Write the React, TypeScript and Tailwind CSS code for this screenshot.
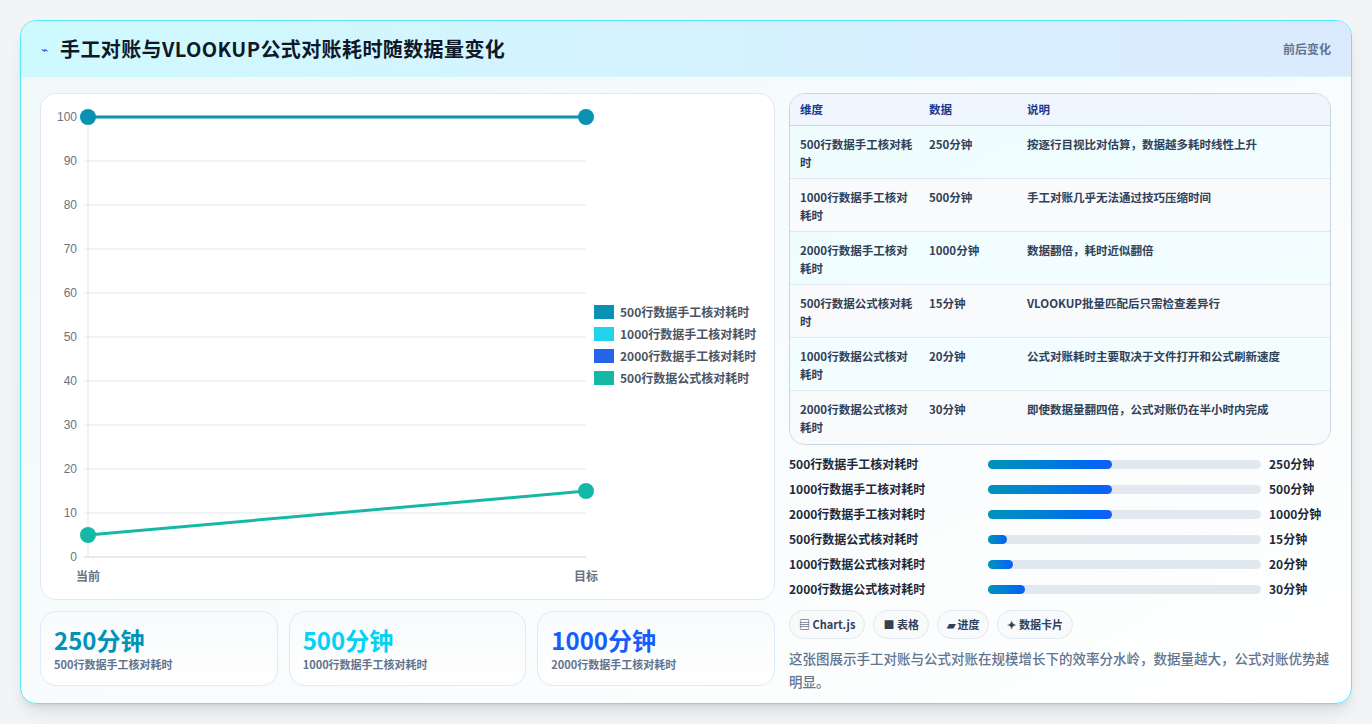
import React from "react";

const rows = [
  ["500行数据手工核对耗时", "250分钟", "按逐行目视比对估算，数据越多耗时线性上升"],
  ["1000行数据手工核对耗时", "500分钟", "手工对账几乎无法通过技巧压缩时间"],
  ["2000行数据手工核对耗时", "1000分钟", "数据翻倍，耗时近似翻倍"],
  ["500行数据公式核对耗时", "15分钟", "VLOOKUP批量匹配后只需检查差异行"],
  ["1000行数据公式核对耗时", "20分钟", "公式对账耗时主要取决于文件打开和公式刷新速度"],
  ["2000行数据公式核对耗时", "30分钟", "即使数据量翻四倍，公式对账仍在半小时内完成"],
];

const bars: [string, string, number][] = [
  ["500行数据手工核对耗时", "250分钟", 45.5],
  ["1000行数据手工核对耗时", "500分钟", 45.5],
  ["2000行数据手工核对耗时", "1000分钟", 45.5],
  ["500行数据公式核对耗时", "15分钟", 7],
  ["1000行数据公式核对耗时", "20分钟", 9.2],
  ["2000行数据公式核对耗时", "30分钟", 13.5],
];

const font = { fontFamily: '"Noto Sans CJK SC", "Noto Sans", sans-serif' };

function Chart() {
  const x0 = 47, x1 = 545, y0 = 463, yTop = 23;
  const ys = (v: number) => y0 - (v / 100) * (y0 - yTop);
  const legend = [
    ["#0891b2", "500行数据手工核对耗时"],
    ["#22d3ee", "1000行数据手工核对耗时"],
    ["#2563eb", "2000行数据手工核对耗时"],
    ["#14b8a6", "500行数据公式核对耗时"],
  ];
  return (
    <svg width="733" height="505" className="block">
      {[0, 10, 20, 30, 40, 50, 60, 70, 80, 90, 100].map((v) => (
        <g key={v}>
          <line x1={x0 - 4} x2={x1} y1={ys(v)} y2={ys(v)} stroke={v === 0 ? "#cbd5e1" : "#e5e7eb"} />
          <text x={x0 - 11} y={ys(v) + 4} textAnchor="end" fontSize="12" fill="#6b7280" fontFamily="Liberation Sans, sans-serif">{v}</text>
        </g>
      ))}
      <line x1={x0} x2={x0} y1={yTop} y2={y0} stroke="#e5e7eb" />
      <text x={x0} y={487} textAnchor="middle" fontSize="12" fontWeight="600" fill="#6b7280" style={font}>当前</text>
      <text x={x1} y={487} textAnchor="middle" fontSize="12" fontWeight="600" fill="#6b7280" style={font}>目标</text>
      <line x1={x0} x2={x1} y1={ys(100)} y2={ys(100)} stroke="#0891b2" strokeWidth="3" />
      <circle cx={x0} cy={ys(100)} r="8" fill="#0891b2" />
      <circle cx={x1} cy={ys(100)} r="8" fill="#0891b2" />
      <line x1={x0} x2={x1} y1={ys(5)} y2={ys(15)} stroke="#14b8a6" strokeWidth="3" />
      <circle cx={x0} cy={ys(5)} r="8" fill="#14b8a6" />
      <circle cx={x1} cy={ys(15)} r="8" fill="#14b8a6" />
      {legend.map(([c, t], i) => (
        <g key={t}>
          <rect x={553} y={211 + i * 22} width="20" height="14" fill={c} />
          <text x={579} y={223 + i * 22} fontSize="12" fontWeight="600" fill="#4b5563" style={font}>{t}</text>
        </g>
      ))}
    </svg>
  );
}

export default function App() {
  return (
    <div className="min-h-screen bg-gray-100 p-5" style={font}>
      <div className="rounded-2xl border border-cyan-300 bg-gradient-to-br from-cyan-50/40 to-white overflow-hidden shadow-lg h-[684px]">
        <div className="flex items-center justify-between h-14 px-5 bg-gradient-to-r from-cyan-100 to-blue-100 border-b border-cyan-100">
          <div className="flex items-center gap-3">
            <span className="text-blue-600 text-xs">⌁</span>
            <span className="text-[20px] font-bold text-gray-900 tracking-[0.4px]">手工对账与VLOOKUP公式对账耗时随数据量变化</span>
          </div>
          <span className="text-xs font-semibold text-slate-500">前后变化</span>
        </div>
        <div className="flex gap-[14px] pl-[19px] pr-5 pt-4">
          <div className="w-[735px] flex flex-col gap-[11px]">
            <div className="rounded-2xl border border-slate-200 bg-white h-[507px]">
              <Chart />
            </div>
            <div className="grid grid-cols-3 gap-[11px]">
              {[
                ["250分钟", "text-cyan-600", "500行数据手工核对耗时"],
                ["500分钟", "text-cyan-400", "1000行数据手工核对耗时"],
                ["1000分钟", "text-blue-600", "2000行数据手工核对耗时"],
              ].map(([v, c, l]) => (
                <div key={l} className="rounded-2xl border border-blue-100 bg-gradient-to-b from-slate-50 to-white px-[13px] h-[75px] flex flex-col justify-center">
                  <div className={`text-[24px] font-bold leading-8 ${c}`}>{v}</div>
                  <div className="text-[11px] font-semibold text-slate-500">{l}</div>
                </div>
              ))}
            </div>
          </div>
          <div className="flex-1 flex flex-col">
            <div className="rounded-2xl border border-slate-300 overflow-hidden text-[11.5px] font-semibold text-slate-700">
              <div className="flex h-8 items-center bg-blue-50 border-b border-slate-300 text-blue-900">
                <div className="w-[139px] pl-[10px]">维度</div>
                <div className="w-[98px]">数据</div>
                <div>说明</div>
              </div>
              {rows.map((r, i) => (
                <div key={i} className={`flex h-[53px] pt-[9px] leading-[18px] ${i % 2 ? "bg-slate-50" : "bg-cyan-50/60"} ${i < 5 ? "border-b border-slate-200" : ""}`}>
                  <div className="w-[139px] pl-[10px] pr-4">{r[0]}</div>
                  <div className="w-[98px]">{r[1]}</div>
                  <div className="flex-1">{r[2]}</div>
                </div>
              ))}
            </div>
            <div className="flex flex-col gap-[7px] mt-[10px]">
              {bars.map(([l, v, w]) => (
                <div key={l} className="flex items-center h-[18px] text-[12px] font-bold text-gray-800">
                  <div className="w-[199px]">{l}</div>
                  <div className="w-[273px] h-[9px] rounded-full bg-slate-200">
                    <div className="h-full rounded-full bg-gradient-to-r from-cyan-600 to-blue-600" style={{ width: `${w}%` }} />
                  </div>
                  <div className="ml-2">{v}</div>
                </div>
              ))}
            </div>
            <div className="flex gap-2 mt-[12px]">
              {["▤ Chart.js", "■ 表格", "▰ 进度", "✦ 数据卡片"].map((t) => (
                <span key={t} className="rounded-full border border-slate-200 bg-slate-50 px-[9px] h-[29px] flex items-center text-[11px] font-semibold text-slate-700">{t}</span>
              ))}
            </div>
            <p className="mt-[8px] text-[13.5px] leading-[23px] text-slate-500 font-medium">
              这张图展示手工对账与公式对账在规模增长下的效率分水岭，数据量越大，公式对账优势越明显。
            </p>
          </div>
        </div>
      </div>
    </div>
  );
}
